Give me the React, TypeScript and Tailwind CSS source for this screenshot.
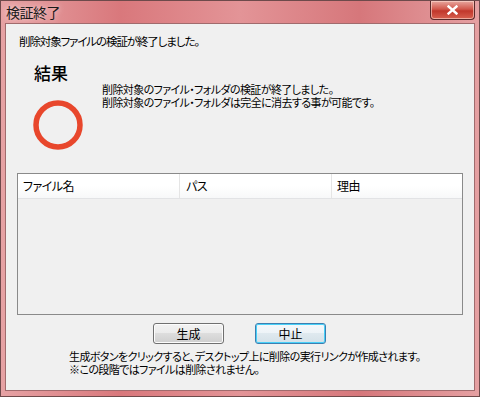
import React from "react";

const jp = { fontFamily: '"Noto Sans CJK JP", "Noto Sans", sans-serif' };

function ResultCircle() {
  return (
    <svg width="52" height="52" viewBox="0 0 52 52">
      <circle cx="26" cy="26" r="22" fill="none" stroke="#e8472c" strokeWidth="5.5" />
    </svg>
  );
}

function CloseButton() {
  return (
    <div className="w-[45px] h-[19px] rounded-b-[4px] border border-t-0 border-[#5a2a2a] bg-[linear-gradient(#e8a79f,#d2584c_45%,#c1372b_55%,#d8604f)] flex items-center justify-center shadow-[inset_0_0_0_1px_rgba(255,220,210,0.6)]">
      <svg width="11" height="10" viewBox="0 0 11 10">
        <path d="M1.5 1.5 L9.5 8.5 M9.5 1.5 L1.5 8.5" stroke="#ffffff" strokeWidth="2.4" strokeLinecap="square" />
      </svg>
    </div>
  );
}

export default function App() {
  return (
    <div
      className="w-[480px] h-[397px] flex flex-col border border-[#6e4a4b] bg-[linear-gradient(90deg,#e6a2a4,#d9787c_25%,#e39497_50%,#d6777b_75%,#e5a0a2)] text-black overflow-hidden [font-feature-settings:'palt']"
      style={jp}
    >
      {/* title bar */}
      <div className="h-[22px] flex items-start justify-between pl-[5px] pr-[4px]">
        <span className="text-[14px] leading-[22px] text-[#1a1a1a] tracking-[-0.5px] [text-shadow:0_0_6px_rgba(255,240,240,0.9)]">
          検証終了
        </span>
        <CloseButton />
      </div>

      {/* client area */}
      <div className="flex-1 mx-[4px] mb-[5px] bg-[#f0f0f0] border border-[#a06b6d] flex flex-col">
        <p className="pt-[10px] pl-[13px] text-[11.5px] leading-[14px] tracking-[-1.1px] whitespace-nowrap">
          削除対象ファイルの検証が終了しました。
        </p>

        <p className="mt-[15px] pl-[28px] text-[17px] leading-[20px] font-medium">結果</p>

        <div className="h-[90px] flex">
          <div className="w-[96px] pl-[26px] pt-[16px]">
            <ResultCircle />
          </div>
          <p className="text-[11px] leading-[13px] tracking-[-0.6px] whitespace-nowrap">
            削除対象のファイル・フォルダの検証が終了しました。
            <br />
            削除対象のファイル・フォルダは完全に消去する事が可能です。
          </p>
        </div>

        {/* list view */}
        <div className="mx-[11px] h-[142px] border border-[#8a8a8a] bg-[#f0f0f0] flex flex-col">
          <div className="h-[25px] flex bg-[linear-gradient(#ffffff,#ffffff_50%,#f7f8f9)] border-b border-[#e2e3e5] text-[12px] tracking-[-0.5px]">
            <div className="w-[162px] pl-[5px] flex items-center border-r border-[#e5e5e5]">ファイル名</div>
            <div className="w-[152px] pl-[6px] flex items-center border-r border-[#e5e5e5]">パス</div>
            <div className="flex-1 pl-[5px] flex items-center">理由</div>
          </div>
        </div>

        {/* buttons */}
        <div className="mt-[8px] flex justify-center gap-[31px] pr-[1px]">
          <button className="w-[71px] h-[21px] rounded-[3px] border border-[#707070] bg-[linear-gradient(#f2f2f2,#ebebeb_50%,#dddddd_50%,#cfcfcf)] text-[12px] leading-none shadow-[inset_0_0_0_1px_#fcfcfc]">
            生成
          </button>
          <button className="w-[71px] h-[21px] rounded-[3px] border border-[#3c7fb1] bg-[linear-gradient(#f4f8fb,#edf3f7_50%,#dfe9ef_50%,#d4e1e8)] text-[12px] leading-none shadow-[inset_0_0_0_1px_#48d0f8]">
            中止
          </button>
        </div>

        <p className="mt-[6px] pl-[63px] text-[11px] leading-[13px] tracking-[-0.6px] whitespace-nowrap">
          生成ボタンをクリックすると、デスクトップ上に削除の実行リンクが作成されます。
          <br />
          ※この段階ではファイルは削除されません。
        </p>
      </div>
    </div>
  );
}
